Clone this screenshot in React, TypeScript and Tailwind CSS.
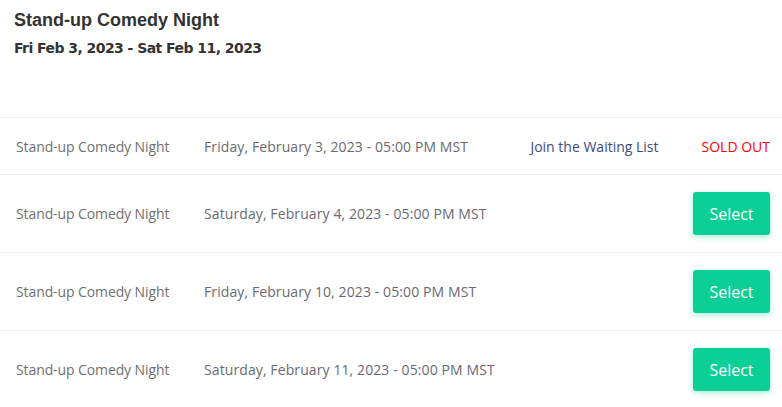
import React from "react";

const rows = [
  { name: "Stand-up Comedy Night", date: "Friday, February 3, 2023 - 05:00 PM MST", sold: true },
  { name: "Stand-up Comedy Night", date: "Saturday, February 4, 2023 - 05:00 PM MST", sold: false },
  { name: "Stand-up Comedy Night", date: "Friday, February 10, 2023 - 05:00 PM MST", sold: false },
  { name: "Stand-up Comedy Night", date: "Saturday, February 11, 2023 - 05:00 PM MST", sold: false },
];

export default function App() {
  return (
    <div className="w-[782px] h-[407px] bg-white overflow-hidden">
      <div className="pl-[14px] pt-[9px] h-[117px]">
        <div className="text-[18px] font-bold text-[#333] leading-[22px] [font-family:'Liberation_Sans',Arial,sans-serif]">
          Stand-up Comedy Night
        </div>
        <div className="mt-[7px] text-[14px] font-bold text-[#333] leading-[20px] [font-family:'DejaVu_Sans',sans-serif] tracking-[-0.55px]">
          Fri Feb 3, 2023 - Sat Feb 11, 2023
        </div>
      </div>
      <div className="border-t border-[#eceef2] [font-family:'Open_Sans',sans-serif] text-[14px]">
        {rows.map((r, i) => (
          <div
            key={i}
            className={`flex items-center pl-[16px] pr-[12px] border-b border-[#eceef2] ${r.sold ? "h-[57px]" : "h-[78px]"}`}
          >
            <div className="w-[188px] text-[#707070] tracking-[-0.1px]">{r.name}</div>
            <div className="flex-1 text-[#6a6a72] tracking-[0.1px]">{r.date}</div>
            {r.sold ? (
              <>
                <div className="text-[#3d4b7c] mr-[43px]">Join the Waiting List</div>
                <div className="text-[#ff0000]">SOLD OUT</div>
              </>
            ) : (
              <button className="w-[77px] h-[43px] rounded-[3px] bg-[#0ccf96] text-white text-[16px] shadow-[0_2px_6px_rgba(12,207,150,0.35)]">
                Select
              </button>
            )}
          </div>
        ))}
      </div>
    </div>
  );
}
